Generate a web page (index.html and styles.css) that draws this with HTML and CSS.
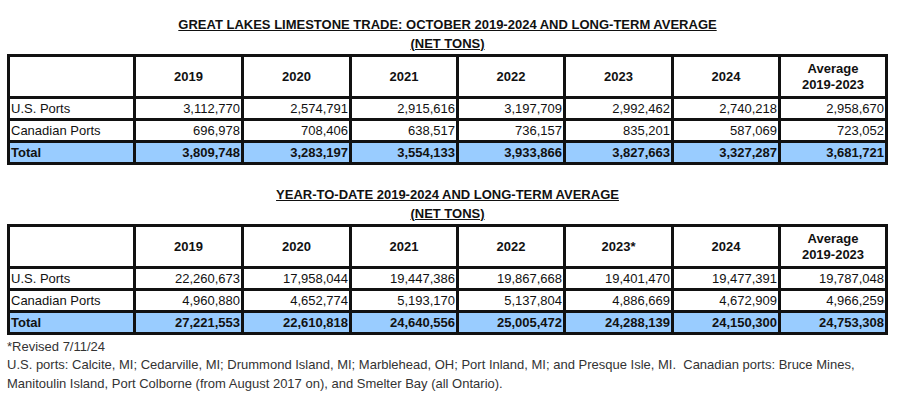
FILE: index.html
```html
<!DOCTYPE html>
<html lang="en">
<head>
<meta charset="utf-8">
<title>Great Lakes Limestone Trade</title>
<link rel="stylesheet" href="styles.css">
</head>
<body>
<div class="page">
  <section class="block">
    <h2 class="title">GREAT LAKES LIMESTONE TRADE: OCTOBER 2019-2024 AND LONG-TERM AVERAGE<br>(NET TONS)</h2>
    <table class="trade">
      <colgroup>
        <col class="c-label"><col class="c108"><col class="c108"><col class="c107"><col class="c107"><col class="c108"><col class="c107"><col class="c107">
      </colgroup>
      <tr class="head">
        <td></td><td>2019</td><td>2020</td><td>2021</td><td>2022</td><td>2023</td><td>2024</td><td>Average<br>2019-2023</td>
      </tr>
      <tr class="row">
        <td class="label">U.S. Ports</td><td>3,112,770</td><td>2,574,791</td><td>2,915,616</td><td>3,197,709</td><td>2,992,462</td><td>2,740,218</td><td>2,958,670</td>
      </tr>
      <tr class="row">
        <td class="label">Canadian Ports</td><td>696,978</td><td>708,406</td><td>638,517</td><td>736,157</td><td>835,201</td><td>587,069</td><td>723,052</td>
      </tr>
      <tr class="row total">
        <td class="label">Total</td><td>3,809,748</td><td>3,283,197</td><td>3,554,133</td><td>3,933,866</td><td>3,827,663</td><td>3,327,287</td><td>3,681,721</td>
      </tr>
    </table>
  </section>

  <section class="block second">
    <h2 class="title">YEAR-TO-DATE 2019-2024 AND LONG-TERM AVERAGE<br>(NET TONS)</h2>
    <table class="trade">
      <colgroup>
        <col class="c-label"><col class="c108"><col class="c108"><col class="c107"><col class="c107"><col class="c108"><col class="c107"><col class="c107">
      </colgroup>
      <tr class="head">
        <td></td><td>2019</td><td>2020</td><td>2021</td><td>2022</td><td>2023*</td><td>2024</td><td>Average<br>2019-2023</td>
      </tr>
      <tr class="row">
        <td class="label">U.S. Ports</td><td>22,260,673</td><td>17,958,044</td><td>19,447,386</td><td>19,867,668</td><td>19,401,470</td><td>19,477,391</td><td>19,787,048</td>
      </tr>
      <tr class="row">
        <td class="label">Canadian Ports</td><td>4,960,880</td><td>4,652,774</td><td>5,193,170</td><td>5,137,804</td><td>4,886,669</td><td>4,672,909</td><td>4,966,259</td>
      </tr>
      <tr class="row total">
        <td class="label">Total</td><td>27,221,553</td><td>22,610,818</td><td>24,640,556</td><td>25,005,472</td><td>24,288,139</td><td>24,150,300</td><td>24,753,308</td>
      </tr>
    </table>
  </section>

  <div class="notes">
    <p class="revised">*Revised 7/11/24</p>
    <p class="ports">U.S. ports: Calcite, MI; Cedarville, MI; Drummond Island, MI; Marblehead, OH; Port Inland, MI; and Presque Isle, MI.&nbsp; Canadian ports: Bruce Mines, Manitoulin Island, Port Colborne (from August 2017 on), and Smelter Bay (all Ontario).</p>
  </div>
</div>
</body>
</html>
```

FILE: styles.css
```css
html, body {
  margin: 0;
  padding: 0;
  background: #ffffff;
}

body {
  font-family: "Liberation Sans", Arial, sans-serif;
  font-size: 13px;
  color: #111;
}

.page {
  width: 881px;
  padding: 15px 0 0 7px;
}

.title {
  margin: 0 0 1px 0;
  font-size: 13px;
  font-weight: bold;
  line-height: 19px;
  text-align: center;
  text-decoration: underline;
  color: #111;
}

.second {
  margin-top: 20px;
}

.trade {
  width: 881px;
  table-layout: fixed;
  border-collapse: collapse;
  border: 3px solid #111;
}

.c-label { width: 126px; }
.c108 { width: 108px; }
.c107 { width: 107px; }

.trade td {
  border: 3px solid #111;
  padding: 0 1px;
  white-space: nowrap;
  overflow: hidden;
}

.head td {
  height: 39px;
  line-height: 16px;
  font-weight: bold;
  text-align: center;
  vertical-align: middle;
}

.row td {
  height: 19px;
  line-height: 19px;
  text-align: right;
  vertical-align: middle;
}

.row td.label {
  text-align: left;
}

.total td {
  background: #99ccff;
  font-weight: bold;
}

.notes {
  margin-top: 2px;
  color: #333;
}

.notes p {
  margin: 0;
}

.revised {
  line-height: 19px;
}

.ports {
  line-height: 18.5px;
}
```
